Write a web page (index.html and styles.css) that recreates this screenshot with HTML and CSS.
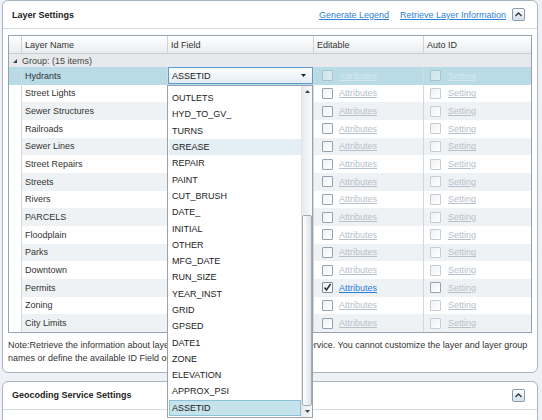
FILE: index.html
```html
<!DOCTYPE html>
<html lang="en">
<head>
  <meta charset="UTF-8" />
  <title>Layer Settings</title>
  <link rel="stylesheet" href="styles.css">
</head>
<body>
  <div class="page">
    <div class="panel">
      <div class="panel-head">
        <span class="panel-title">Layer Settings</span>
        <a href="#">Generate Legend</a>
        <a href="#">Retrieve Layer Information</a>
        <span class="collapse"><svg width="7" height="5" viewBox="0 0 7 5"><polyline points="0.5,4 3.5,1 6.5,4" fill="none" stroke="#2b3540" stroke-width="1.3"/></svg></span>
      </div>
      <div class="panel-body">
        <div class="grid">
          <div class="row head">
            <div class="cell"></div>
            <div class="cell">Layer Name</div>
            <div class="cell">Id Field</div>
            <div class="cell">Editable</div>
            <div class="cell last">Auto ID</div>
          </div>
          <div class="group">
            <svg width="4" height="4" viewBox="0 0 4 4"><polygon points="4,0 4,4 0,4" fill="#444"/></svg>
            <span>Group: (15 items)</span>
          </div>

          <div class="row sel">
            <div class="cell"></div>
            <div class="cell name">Hydrants</div>
            <div class="cell idf">
              <div class="combo">
                <span>ASSETID</span>
                <svg width="5" height="3" viewBox="0 0 5 3"><polygon points="0,0 5,0 2.5,3" fill="#222"/></svg>
              </div>
              <div class="popup">
                <div class="list">
                  <div class="item">OUTLETS</div>
                  <div class="item">HYD_TO_GV_</div>
                  <div class="item">TURNS</div>
                  <div class="item hover">GREASE</div>
                  <div class="item">REPAIR</div>
                  <div class="item">PAINT</div>
                  <div class="item">CUT_BRUSH</div>
                  <div class="item">DATE_</div>
                  <div class="item">INITIAL</div>
                  <div class="item">OTHER</div>
                  <div class="item">MFG_DATE</div>
                  <div class="item">RUN_SIZE</div>
                  <div class="item">YEAR_INST</div>
                  <div class="item">GRID</div>
                  <div class="item">GPSED</div>
                  <div class="item">DATE1</div>
                  <div class="item">ZONE</div>
                  <div class="item">ELEVATION</div>
                  <div class="item">APPROX_PSI</div>
                  <div class="item picked">ASSETID</div>
                </div>
                <div class="scroll">
                  <div class="sbtn"><svg width="5" height="3" viewBox="0 0 5 3"><polygon points="0,3 5,3 2.5,0" fill="#444"/></svg></div>
                  <div class="track"></div>
                  <div class="thumb"></div>
                  <div class="sbtn"><svg width="5" height="3" viewBox="0 0 5 3"><polygon points="0,0 5,0 2.5,3" fill="#444"/></svg></div>
                </div>
              </div>
            </div>
            <div class="cell edit"><span class="cb"></span><a class="off">Attributes</a></div>
            <div class="cell auto last"><span class="cb"></span><a class="off">Setting</a></div>
          </div>

          <div class="row">
            <div class="cell"></div><div class="cell name">Street Lights</div><div class="cell idf"></div>
            <div class="cell edit"><span class="cb"></span><a class="off">Attributes</a></div>
            <div class="cell auto last"><span class="cb dim"></span><a class="off">Setting</a></div>
          </div>
          <div class="row alt">
            <div class="cell"></div><div class="cell name">Sewer Structures</div><div class="cell idf"></div>
            <div class="cell edit"><span class="cb"></span><a class="off">Attributes</a></div>
            <div class="cell auto last"><span class="cb dim"></span><a class="off">Setting</a></div>
          </div>
          <div class="row">
            <div class="cell"></div><div class="cell name">Railroads</div><div class="cell idf"></div>
            <div class="cell edit"><span class="cb"></span><a class="off">Attributes</a></div>
            <div class="cell auto last"><span class="cb dim"></span><a class="off">Setting</a></div>
          </div>
          <div class="row alt">
            <div class="cell"></div><div class="cell name">Sewer Lines</div><div class="cell idf"></div>
            <div class="cell edit"><span class="cb"></span><a class="off">Attributes</a></div>
            <div class="cell auto last"><span class="cb dim"></span><a class="off">Setting</a></div>
          </div>
          <div class="row">
            <div class="cell"></div><div class="cell name">Street Repairs</div><div class="cell idf"></div>
            <div class="cell edit"><span class="cb"></span><a class="off">Attributes</a></div>
            <div class="cell auto last"><span class="cb dim"></span><a class="off">Setting</a></div>
          </div>
          <div class="row alt">
            <div class="cell"></div><div class="cell name">Streets</div><div class="cell idf"></div>
            <div class="cell edit"><span class="cb"></span><a class="off">Attributes</a></div>
            <div class="cell auto last"><span class="cb dim"></span><a class="off">Setting</a></div>
          </div>
          <div class="row">
            <div class="cell"></div><div class="cell name">Rivers</div><div class="cell idf"></div>
            <div class="cell edit"><span class="cb"></span><a class="off">Attributes</a></div>
            <div class="cell auto last"><span class="cb dim"></span><a class="off">Setting</a></div>
          </div>
          <div class="row alt">
            <div class="cell"></div><div class="cell name">PARCELS</div><div class="cell idf"></div>
            <div class="cell edit"><span class="cb"></span><a class="off">Attributes</a></div>
            <div class="cell auto last"><span class="cb dim"></span><a class="off">Setting</a></div>
          </div>
          <div class="row">
            <div class="cell"></div><div class="cell name">Floodplain</div><div class="cell idf"></div>
            <div class="cell edit"><span class="cb"></span><a class="off">Attributes</a></div>
            <div class="cell auto last"><span class="cb dim"></span><a class="off">Setting</a></div>
          </div>
          <div class="row alt">
            <div class="cell"></div><div class="cell name">Parks</div><div class="cell idf"></div>
            <div class="cell edit"><span class="cb"></span><a class="off">Attributes</a></div>
            <div class="cell auto last"><span class="cb dim"></span><a class="off">Setting</a></div>
          </div>
          <div class="row">
            <div class="cell"></div><div class="cell name">Downtown</div><div class="cell idf"></div>
            <div class="cell edit"><span class="cb"></span><a class="off">Attributes</a></div>
            <div class="cell auto last"><span class="cb dim"></span><a class="off">Setting</a></div>
          </div>
          <div class="row alt">
            <div class="cell"></div><div class="cell name">Permits</div><div class="cell idf"></div>
            <div class="cell edit"><span class="cb on"><svg width="9" height="9" viewBox="0 0 9 9"><polyline points="1.5,4.5 3.5,7 7.5,1" fill="none" stroke="#1f2a33" stroke-width="1.4"/></svg></span><a class="on">Attributes</a></div>
            <div class="cell auto last"><span class="cb"></span><a class="off">Setting</a></div>
          </div>
          <div class="row">
            <div class="cell"></div><div class="cell name">Zoning</div><div class="cell idf"></div>
            <div class="cell edit"><span class="cb"></span><a class="off">Attributes</a></div>
            <div class="cell auto last"><span class="cb dim"></span><a class="off">Setting</a></div>
          </div>
          <div class="row alt">
            <div class="cell"></div><div class="cell name">City Limits</div><div class="cell idf"></div>
            <div class="cell edit"><span class="cb"></span><a class="off">Attributes</a></div>
            <div class="cell auto last"><span class="cb dim"></span><a class="off">Setting</a></div>
          </div>
        </div>
        <p class="note">Note:Retrieve the information about layers and layer groups from the map service. You cannot customize the layer and layer group<br>names or define the available ID Field options for layers in this list.</p>
      </div>
    </div>

    <div class="panel">
      <div class="panel-head">
        <span class="panel-title">Geocoding Service Settings</span>
        <span class="collapse"><svg width="7" height="5" viewBox="0 0 7 5"><polyline points="0.5,4 3.5,1 6.5,4" fill="none" stroke="#2b3540" stroke-width="1.3"/></svg></span>
      </div>
      <div class="panel-body short"></div>
    </div>
  </div>
</body>
</html>
```

FILE: styles.css
```css
* {
  box-sizing: border-box;
}

body {
  margin: 0;
  background: #eef1f5;
  font-family: "Liberation Sans", Arial, sans-serif;
  font-size: 9px;
  color: #333;
}

.page {
  padding: 0 4px 0 2px;
}

.panel {
  background: #fff;
  border: 1px solid #aab5c2;
  border-radius: 6px;
}

.panel + .panel {
  margin-top: 8px;
}

.panel-head {
  height: 28px;
  display: flex;
  align-items: center;
  padding: 0 12px 0 9px;
  border-bottom: 1px solid #d5dbe2;
}

.panel-title {
  flex: 1;
  font-weight: bold;
  color: #1c1c1c;
}

.panel-head a {
  margin-left: 11px;
  color: #2f7fd6;
  text-decoration: underline;
}

.collapse {
  width: 13px;
  height: 13px;
  margin-left: 6px;
  display: flex;
  align-items: center;
  justify-content: center;
  border: 1px solid #8c9aaa;
  border-radius: 2px;
  background: linear-gradient(#fdfeff, #d2e0ed);
}

.panel-body {
  padding: 6px 5px 7px 5px;
}

.panel-body.short {
  height: 40px;
}

/* Grid */
.grid {
  border: 1px solid #98a2ac;
}

.row {
  display: grid;
  grid-template-columns: 13px 146px 146px 110px 1fr;
  height: 17.67px;
  background: #fff;
}

.row.alt {
  background: #eff2f5;
}

.row.sel {
  background: #b8dbe6;
}

.cell {
  display: flex;
  align-items: center;
  border-right: 1px solid #d3d8dd;
  white-space: nowrap;
}

.cell.last {
  border-right: none;
}

.row .cell:first-child {
  background: #fff;
}

.row.sel .cell:first-child {
  background: #b8dbe6;
}

.row.head {
  height: 18px;
  background: linear-gradient(#ffffff, #e9ecef);
  border-bottom: 1px solid #c8ced4;
}

.row.head .cell {
  padding-left: 3px;
  border-right-color: #cfd4d9;
  color: #333;
}

.row.head .cell:first-child {
  background: transparent;
}

.group {
  height: 13px;
  display: flex;
  align-items: center;
  gap: 5px;
  padding-left: 4px;
  background: #e7e9ec;
  color: #444;
}

.name {
  padding-left: 3px;
  color: #333;
}

.edit {
  padding-left: 8px;
  gap: 6px;
}

.auto {
  padding-left: 6px;
  gap: 7px;
}

.cb {
  width: 11px;
  height: 11px;
  display: flex;
  align-items: center;
  justify-content: center;
  border: 1px solid #95a3b1;
  border-radius: 1px;
  background: linear-gradient(135deg, #eef1f4, #ffffff);
}

.cb.dim {
  border-color: #c6cdd5;
}

.cb.on {
  border-color: #7f8e9d;
}

a.off {
  color: #b7c0c9;
  text-decoration: underline;
}

a.on {
  color: #2a7de0;
  text-decoration: underline;
}

.row.sel a.off {
  color: #d6e9ef;
}

.row.sel .cb {
  opacity: 0.45;
}

/* Combo box and its drop-down */
.idf {
  position: relative;
}

.combo {
  width: 145px;
  height: 17px;
  display: flex;
  align-items: center;
  justify-content: space-between;
  padding: 0 6px 0 3px;
  border: 1px solid #5d9bd0;
  background: linear-gradient(#fdfeff, #e3ecf4);
  color: #222;
}

.popup {
  position: absolute;
  left: -1px;
  top: 18px;
  width: 146px;
  height: 333px;
  display: flex;
  border: 1px solid #99a2ab;
  background: #fff;
  z-index: 10;
}

.list {
  flex: 1;
  padding: 4px 0 0 1px;
}

.item {
  height: 16.3px;
  display: flex;
  align-items: center;
  padding-left: 3px;
  color: #222;
}

.item.hover {
  background: #e4eef5;
}

.item.picked {
  background: #c6e3ec;
  border: 1px solid #86c3d7;
  padding-left: 2px;
}

.scroll {
  width: 11px;
  display: flex;
  flex-direction: column;
  background: linear-gradient(90deg, #e8ebee, #f8f9fa);
  border-left: 1px solid #e0e4e8;
}

.sbtn {
  height: 11px;
  display: flex;
  align-items: center;
  justify-content: center;
}

.track {
  height: 118px;
}

.thumb {
  height: 191px;
  border: 1px solid #a2abb4;
  border-radius: 2px;
  background: linear-gradient(90deg, #ffffff, #dce2e8);
}

.note {
  margin: 6px 0 0 0;
  line-height: 13px;
  white-space: nowrap;
  color: #333;
}
```
